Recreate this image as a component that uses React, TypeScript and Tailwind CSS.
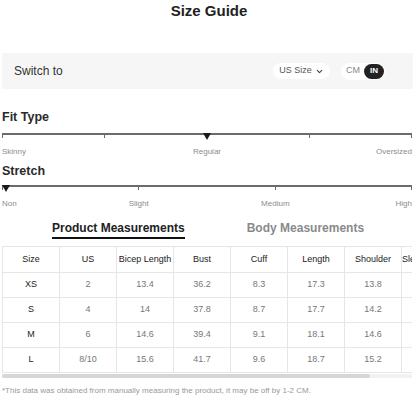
import { ChevronDown } from "lucide-react";

const COLS = ["Size", "US", "Bicep Length", "Bust", "Cuff", "Length", "Shoulder", "Sleeve Length"];
const ROWS = [
  ["XS", "2", "13.4", "36.2", "8.3", "17.3", "13.8", "23.2"],
  ["S", "4", "14", "37.8", "8.7", "17.7", "14.2", "23.4"],
  ["M", "6", "14.6", "39.4", "9.1", "18.1", "14.6", "23.6"],
  ["L", "8/10", "15.6", "41.7", "9.6", "18.7", "15.2", "23.8"],
];

function Scale({ ticks, marker }: { ticks: number; marker: number }) {
  return (
    <div className="relative">
      <div className="h-[2px] bg-[#6b6b6b]" />
      <div className="flex justify-between">
        {Array.from({ length: ticks }).map((_, i) => (
          <span key={i} className="w-px h-[3px] bg-[#6b6b6b]" />
        ))}
      </div>
      <div
        className="absolute top-0 w-0 h-0 border-l-[4px] border-r-[4px] border-t-[7px] border-l-transparent border-r-transparent border-t-[#1a1a1a] -translate-x-1/2"
        style={{ left: `${marker}%` }}
      />
    </div>
  );
}

export default function App() {
  return (
    <div className="w-[418px] h-[397px] overflow-hidden bg-white text-[#222] font-['Liberation_Sans',Arial,sans-serif]">
      <h1 className="text-center text-[15px] font-bold leading-[18px] pt-[2px]">Size Guide</h1>

      <div className="ml-[2px] mr-[5px] mt-[33px] h-[36px] bg-[#f6f6f6] flex items-center pl-[12px] pr-[28px]">
        <span className="text-[12px] text-[#333]">Switch to</span>
        <div className="ml-auto flex items-center gap-[11px]">
          <div className="h-[16px] w-[57px] rounded-full bg-white flex items-center justify-center gap-[3px] text-[9px] text-[#555]">
            US Size
            <ChevronDown size={9} strokeWidth={3} className="text-[#444]" />
          </div>
          <div className="h-[17px] w-[44px] rounded-full bg-white flex items-center pl-[5px] pr-[1px] text-[9px]">
            <span className="text-[#888]">CM</span>
            <span className="ml-auto h-[15px] w-[20px] rounded-full bg-[#222] text-white font-bold text-[8px] flex items-center justify-center">IN</span>
          </div>
        </div>
      </div>

      <div className="ml-[2px] mr-[6px]">
        <h2 className="mt-[20px] text-[12.5px] font-bold leading-[16px] text-[#2a2a2a]">Fit Type</h2>
        <div className="mt-[8px]">
          <Scale ticks={5} marker={49.9} />
        </div>
        <div className="grid grid-cols-3 text-[8px] text-[#8c8c8c] mt-[9px] leading-[10px]">
          <span>Skinny</span>
          <span className="text-center">Regular</span>
          <span className="text-right">Oversized</span>
        </div>

        <h2 className="mt-[6px] text-[12.5px] font-bold leading-[16px] text-[#2a2a2a]">Stretch</h2>
        <div className="mt-[6px]">
          <Scale ticks={4} marker={1} />
        </div>
        <div className="grid grid-cols-6 text-[8px] text-[#8c8c8c] mt-[9px] leading-[10px]">
          <span>Non</span>
          <span className="col-span-2 text-center">Slight</span>
          <span className="col-span-2 text-center">Medium</span>
          <span className="text-right">High</span>
        </div>

        <div className="mt-[11px] flex text-[12px] font-bold leading-[16px]">
          <div className="ml-[50px] flex flex-col items-center">
            <span className="text-[#222]">Product Measurements</span>
            <span className="mt-[1px] h-[2px] w-full bg-[#111]" />
          </div>
          <span className="ml-[62px] text-[#8a8a8a]">Body Measurements</span>
        </div>

        <div className="mt-[7px] overflow-x-auto [scrollbar-width:none]">
          <table className="border-collapse text-[9px] w-[456px] table-fixed">
            <thead>
              <tr className="h-[26px]">
                {COLS.map((c) => (
                  <th key={c} className="w-[57px] border border-[#e6e6e6] font-normal text-[#222] whitespace-nowrap overflow-hidden">
                    {c}
                  </th>
                ))}
              </tr>
            </thead>
            <tbody>
              {ROWS.map((r) => (
                <tr key={r[0]} className="h-[25px]">
                  {r.map((v, i) => (
                    <td
                      key={i}
                      className={`border border-[#e6e6e6] text-center ${i === 0 ? "text-[#222]" : "text-[#777]"}`}
                    >
                      {v}
                    </td>
                  ))}
                </tr>
              ))}
            </tbody>
          </table>
        </div>
        <div className="mt-[1px] h-[4px] bg-[#f2f2f2]">
          <div className="h-full w-[368px] rounded-full bg-[#d6d6d6]" />
        </div>

        <p className="mt-[7px] text-[8px] text-[#999]">
          *This data was obtained from manually measuring the product, it may be off by 1-2 CM.
        </p>
      </div>
    </div>
  );
}
